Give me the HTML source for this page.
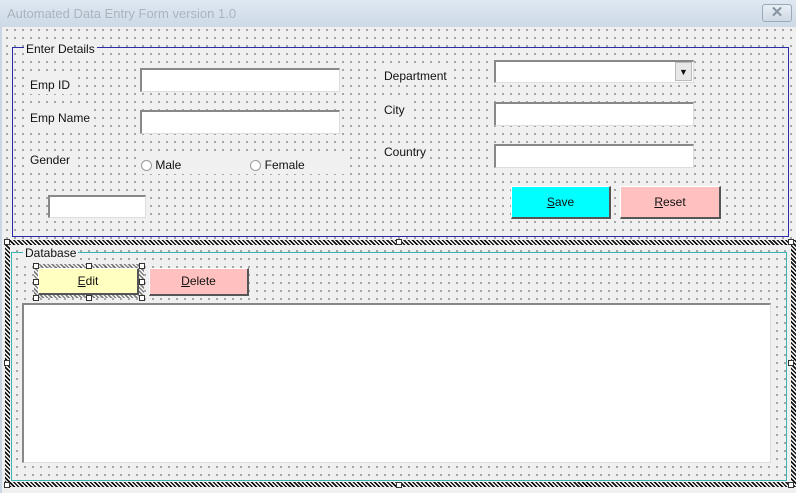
<!DOCTYPE html>
<html><head><meta charset="utf-8"><style>
*{margin:0;padding:0;box-sizing:border-box}
body{width:796px;height:493px;overflow:hidden;position:relative;font-family:"Liberation Sans",Tahoma,sans-serif;font-size:12px;color:#111;
background-color:#f0f0f0;background-image:radial-gradient(circle,#444 0.6px,transparent 0.9px);background-size:8px 8px;background-position:3px 2px}
.a{position:absolute}
.title{left:0;top:0;width:796px;height:27px;background:linear-gradient(#dfe8f2,#cdd9e6);color:#a9b4bf;font-size:13px;padding:6px 0 0 7px}
.x{left:762px;top:4px;width:30px;height:18px;border:1px solid #9aa8b8;border-radius:3px;background:linear-gradient(#e8eef5,#cfd9e4);color:#8894a2;text-align:center;font-size:15px;line-height:16px;font-weight:bold}
.frame1{left:12px;top:47px;width:777px;height:190px;border:1px solid #2a2aa8}
.flabel{background:#f0f0f0;padding:0 2px}
.tb{background:#fff;border-top:2px solid #888;border-left:2px solid #888;border-right:1px solid #ddd;border-bottom:1px solid #ddd}
.lbl{background:#f0f0f0;padding:2px 3px}
.btn{text-align:center;font-size:12px;border-right:2px solid #555;border-bottom:2px solid #555;border-top:1px solid #fff;border-left:1px solid #fff}
.hatch{background:repeating-linear-gradient(45deg,#111 0 1.6px,#fff 1.6px 3px)}
.h{width:6px;height:6px;background:#fff;border:1px solid #333}
.dots{background-color:#f0f0f0;background-image:radial-gradient(circle,#444 0.6px,transparent 0.9px);background-size:8px 8px;background-position:3px 2px}
</style></head><body>
<div class="a title">Automated Data Entry Form version 1.0</div>
<div class="a x">✕</div>
<div class="a" style="left:0;top:27px;width:2px;height:466px;background:#c9d6e4"></div>

<div class="a frame1"></div>
<div class="a flabel" style="left:24px;top:42px">Enter Details</div>

<div class="a lbl" style="left:27px;top:76px">Emp ID</div>
<div class="a tb" style="left:140px;top:68px;width:200px;height:24px"></div>
<div class="a lbl" style="left:27px;top:109px">Emp Name</div>
<div class="a tb" style="left:140px;top:110px;width:200px;height:24px"></div>
<div class="a lbl" style="left:27px;top:151px">Gender</div>
<div class="a lbl" style="left:138px;top:156px;width:212px"><span style="display:inline-block;width:11px;height:11px;border:1px solid #999;border-radius:50%;background:#fff;vertical-align:-2px"></span> Male<span style="display:inline-block;width:69px"></span><span style="display:inline-block;width:11px;height:11px;border:1px solid #999;border-radius:50%;background:#fff;vertical-align:-2px"></span> Female</div>
<div class="a tb" style="left:48px;top:195px;width:98px;height:23px"></div>

<div class="a lbl" style="left:381px;top:67px">Department</div>
<div class="a tb" style="left:494px;top:60px;width:200px;height:23px"></div>
<div class="a" style="left:675px;top:62px;width:17px;height:19px;background:#e8e8e8;border:1px solid #bbb;font-size:9px;text-align:center;line-height:18px">▼</div>
<div class="a lbl" style="left:381px;top:101px">City</div>
<div class="a tb" style="left:494px;top:102px;width:200px;height:24px"></div>
<div class="a lbl" style="left:381px;top:143px">Country</div>
<div class="a tb" style="left:494px;top:144px;width:200px;height:24px"></div>

<div class="a btn" style="left:511px;top:186px;width:100px;height:33px;background:#00ffff;line-height:30px"><u>S</u>ave</div>
<div class="a btn" style="left:620px;top:186px;width:101px;height:33px;background:#ffc0c0;line-height:30px"><u>R</u>eset</div>

<div class="a hatch" style="left:5px;top:240px;width:791px;height:247px"></div>
<div class="a dots" style="left:10px;top:245px;width:781px;height:237px"></div>
<div class="a h" style="left:4px;top:239px"></div><div class="a h" style="left:396px;top:239px"></div><div class="a h" style="left:788px;top:239px"></div>
<div class="a h" style="left:4px;top:360px"></div><div class="a h" style="left:788px;top:360px"></div>
<div class="a h" style="left:4px;top:482px"></div><div class="a h" style="left:396px;top:482px"></div><div class="a h" style="left:788px;top:482px"></div>
<div class="a" style="left:11px;top:252px;width:776px;height:229px;border:1px solid #3cb4b4"></div>
<div class="a flabel" style="left:23px;top:246px">Database</div>

<div class="a hatch" style="left:34px;top:264px;width:110px;height:34px;opacity:.5"></div>
<div class="a btn" style="left:38px;top:268px;width:101px;height:27px;background:#ffffc0;line-height:25px"><u>E</u>dit</div>
<div class="a h" style="left:33px;top:263px"></div><div class="a h" style="left:86px;top:263px"></div><div class="a h" style="left:139px;top:263px"></div>
<div class="a h" style="left:33px;top:279px"></div><div class="a h" style="left:139px;top:279px"></div>
<div class="a h" style="left:33px;top:295px"></div><div class="a h" style="left:86px;top:295px"></div><div class="a h" style="left:139px;top:295px"></div>
<div class="a btn" style="left:149px;top:268px;width:100px;height:28px;background:#ffc0c0;line-height:25px"><u>D</u>elete</div>

<div class="a tb" style="left:22px;top:303px;width:749px;height:160px"></div>
</body></html>
